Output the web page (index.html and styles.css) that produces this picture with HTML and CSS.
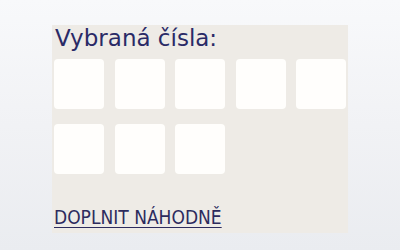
FILE: index.html
```html
<!DOCTYPE html>
<html lang="cs">
<head>
<meta charset="utf-8">
<link rel="stylesheet" href="styles.css">
</head>
<body>
<section class="panel">
  <h2 class="title">Vybraná čísla:</h2>
  <div class="grid">
    <div class="cell"></div>
    <div class="cell"></div>
    <div class="cell"></div>
    <div class="cell"></div>
    <div class="cell"></div>
    <div class="cell"></div>
    <div class="cell"></div>
    <div class="cell"></div>
  </div>
  <a class="random" href="#">DOPLNIT NÁHODNĚ</a>
</section>
</body>
</html>
```

FILE: styles.css
```css
html, body {
  margin: 0;
  padding: 0;
  height: 100%;
}
body {
  background: linear-gradient(to bottom, #f8f9fb 0%, #f1f2f5 50%, #eaecf0 100%);
  padding: 25px 0 0 52px;
  box-sizing: border-box;
}
.panel {
  width: 296px;
  height: 208px;
  box-sizing: border-box;
  padding: 0 2px;
  background: #eeebe6;
  display: flex;
  flex-direction: column;
}
.title {
  margin: 0;
  padding-left: 1px;
  font-family: "DejaVu Sans", Verdana, sans-serif;
  font-weight: normal;
  font-size: 23px;
  line-height: 27px;
  color: #2a2a66;
}
.grid {
  margin-top: 7px;
  display: grid;
  grid-template-columns: repeat(5, 50px);
  grid-auto-rows: 50px;
  column-gap: 10.5px;
  row-gap: 15px;
}
.cell {
  background: #fffefc;
  border-radius: 4px;
}
.random {
  margin-top: 32px;
  align-self: flex-start;
  font-family: "DejaVu Sans Condensed", "DejaVu Sans", sans-serif;
  font-stretch: condensed;
  font-size: 19px;
  line-height: 22px;
  color: #2d2b5e;
  text-decoration: underline;
  text-underline-offset: 3px;
}
```
